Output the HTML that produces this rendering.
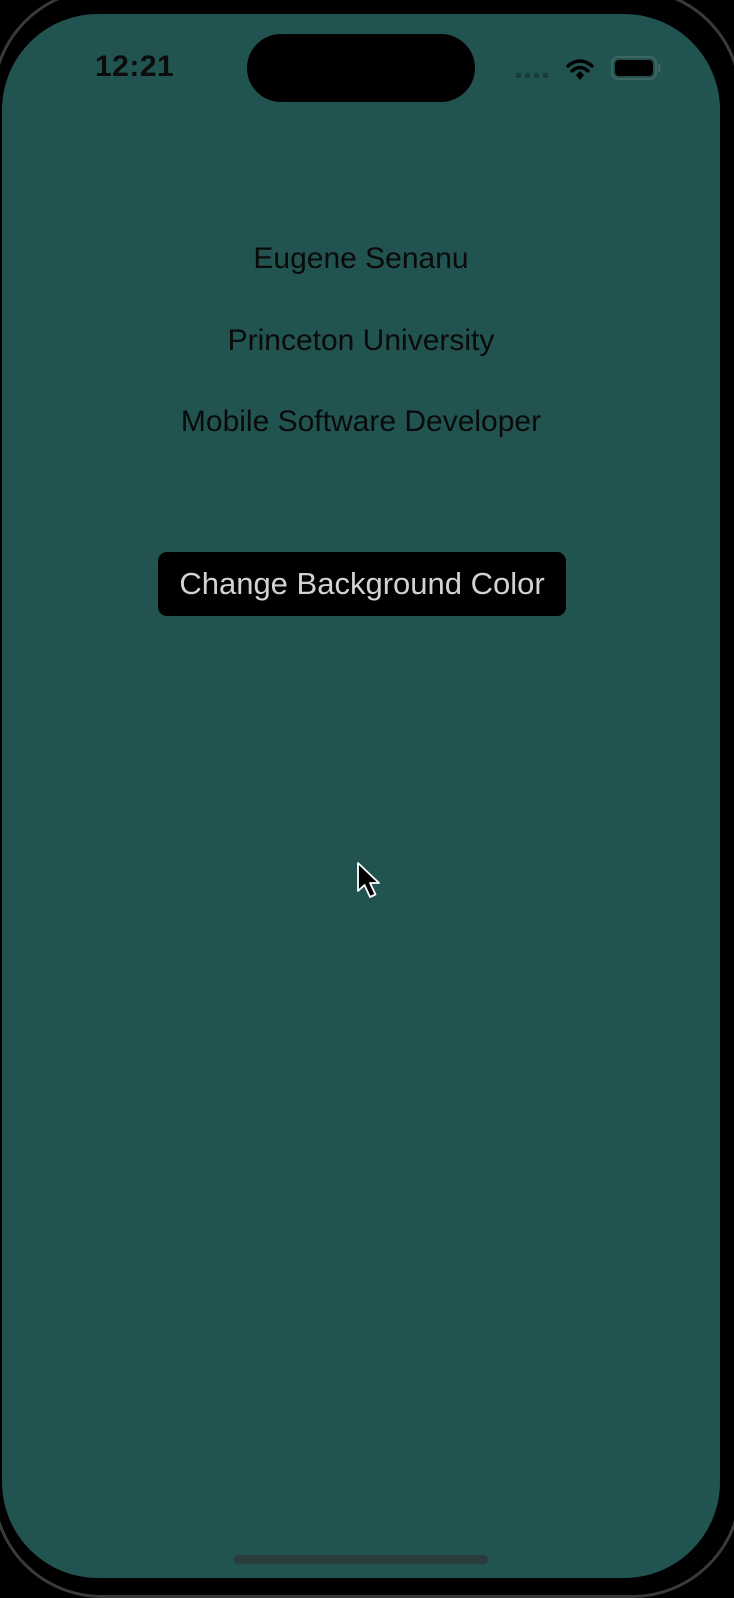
<!DOCTYPE html>
<html><head><meta charset="utf-8"><style>
html,body{margin:0;padding:0;background:#000;width:734px;height:1578px;overflow:hidden;font-family:"Liberation Sans",sans-serif;}
.bezel{position:absolute;left:-8px;top:-12px;width:750px;height:1610px;border-radius:110px;border:3px solid #3a3a3a;box-sizing:border-box;}
.screen{position:absolute;left:2px;top:14px;width:718px;height:1564px;background:#215451;border-radius:96px;overflow:hidden;}
.island{position:absolute;left:247px;top:34px;width:228px;height:68px;background:#000;border-radius:34px;}
.time{position:absolute;left:95px;top:50px;font-size:30px;font-weight:bold;color:#0c0c0c;letter-spacing:0.5px;}
.t{position:absolute;left:0;width:722px;text-align:center;font-size:30px;color:#0a0a0a;}
.btn{position:absolute;left:158px;top:552px;width:408px;height:64px;background:#000;border-radius:9px;color:#d2d2d2;font-size:31px;text-align:center;line-height:64px;}
.home{position:absolute;left:234px;top:1555px;width:254px;height:9px;border-radius:5px;background:#2c3c3c;}
</style></head><body>
<div class="bezel"></div>
<div class="screen"></div>
<div class="island"></div>
<div class="time">12:21</div>
<svg style="position:absolute;left:515px;top:55px" width="150" height="30">
 <g fill="#1a3a38"><rect x="1" y="18" width="5" height="5" rx="1"/><rect x="10" y="18" width="5" height="5" rx="1"/><rect x="19" y="18" width="5" height="5" rx="1"/><rect x="28" y="18" width="5" height="5" rx="1"/></g>
 <g fill="none" stroke="#000" stroke-width="3.4" stroke-linecap="round">
  <path d="M53 11 Q65 1 77 11"/><path d="M57 16 Q65 9 73 16"/>
 </g>
 <path d="M61 20 L65 16 L69 20 L65 25 Z" fill="#000"/>
 <rect x="97" y="2" width="44" height="22" rx="6" fill="none" stroke="#3d6663" stroke-width="2"/>
 <rect x="100" y="5" width="38" height="16" rx="4" fill="#000"/>
 <rect x="142.5" y="9" width="3" height="8" rx="1" fill="#3d6663"/>
</svg>
<div class="t" style="top:242px">Eugene Senanu</div>
<div class="t" style="top:324px">Princeton University</div>
<div class="t" style="top:405px">Mobile Software Developer</div>
<div class="btn">Change Background Color</div>
<svg style="position:absolute;left:355px;top:860px" width="30" height="42">
 <path d="M3 3 L3 31 L9.5 25 L15 37 L20.5 34.5 L15 23 L24 23 Z" fill="#000" stroke="#fff" stroke-width="1.8" stroke-linejoin="round"/>
</svg>
<div class="home"></div>
</body></html>
